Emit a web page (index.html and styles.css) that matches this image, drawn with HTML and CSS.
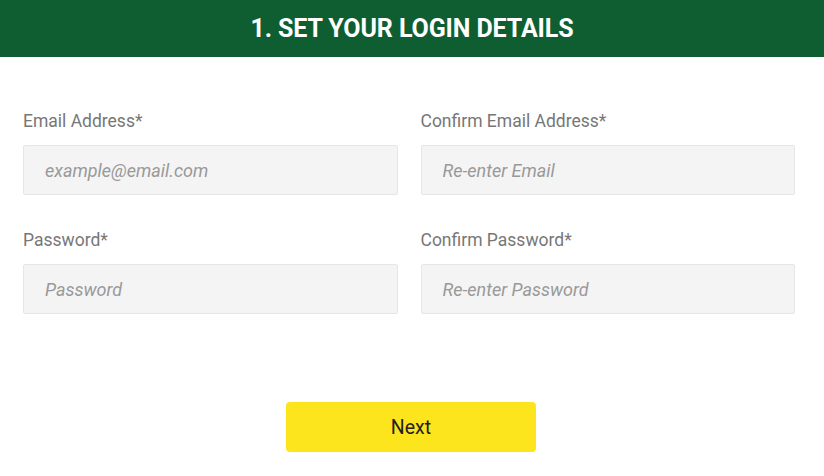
FILE: index.html
```html
<!DOCTYPE html>
<html lang="en">
  <head>
    <meta charset="UTF-8" />
    <meta name="viewport" content="width=device-width, initial-scale=1.0" />
    <title>Set your login details</title>
    <link rel="stylesheet" href="styles.css">
  </head>
  <body>
    <div class="step-header">
      <h1>1. Set your login details</h1>
    </div>

    <form class="login-form" onsubmit="return false">
      <div class="fields">
        <div class="field">
          <label for="email">Email Address*</label>
          <input type="email" id="email" placeholder="example@email.com" />
        </div>
        <div class="field">
          <label for="emailConfirm">Confirm Email Address*</label>
          <input type="email" id="emailConfirm" placeholder="Re-enter Email" />
        </div>
        <div class="field">
          <label for="password">Password*</label>
          <input type="password" id="password" placeholder="Password" />
        </div>
        <div class="field">
          <label for="passwordConfirm">Confirm Password*</label>
          <input type="password" id="passwordConfirm" placeholder="Re-enter Password" />
        </div>
      </div>

      <!-- Next step -->
      <div class="actions">
        <button type="submit" class="next-btn">Next</button>
      </div>
    </form>
  </body>
</html>
```

FILE: styles.css
```css
* {
  margin: 0;
  padding: 0;
  box-sizing: border-box;
}

body {
  font-family: Roboto, 'Liberation Sans', Arial, sans-serif;
  background: #fff;
  color: #333;
}

.step-header {
  background: #0e5e32;
  height: 57px;
  display: flex;
  align-items: center;
  justify-content: center;
}

.step-header h1 {
  color: #fff;
  font-size: 25px;
  font-weight: 700;
  letter-spacing: -0.1px;
  text-transform: uppercase;
}

.login-form {
  padding: 53px 29px 0 23px;
}

.fields {
  display: grid;
  grid-template-columns: 1fr 1fr;
  column-gap: 23px;
  row-gap: 34px;
}

.field {
  display: flex;
  flex-direction: column;
  gap: 13px;
}

.field label {
  font-size: 17.5px;
  color: #777;
  line-height: 22px;
}

.field input {
  height: 50px;
  background: #f4f4f4;
  border: 1px solid #e6e6e6;
  border-radius: 2px;
  padding: 0 21px;
  font-family: inherit;
  font-size: 18px;
  color: #333;
  outline: none;
}

.field input::placeholder {
  color: #999;
  font-style: italic;
}

.actions {
  display: flex;
  justify-content: center;
  padding: 88px 0 0 4px;
}

.next-btn {
  width: 250px;
  height: 50px;
  background: #fde51e;
  border: none;
  border-radius: 4px;
  font-family: inherit;
  font-size: 19.5px;
  font-weight: 400;
  color: #222;
  cursor: pointer;
}
```
